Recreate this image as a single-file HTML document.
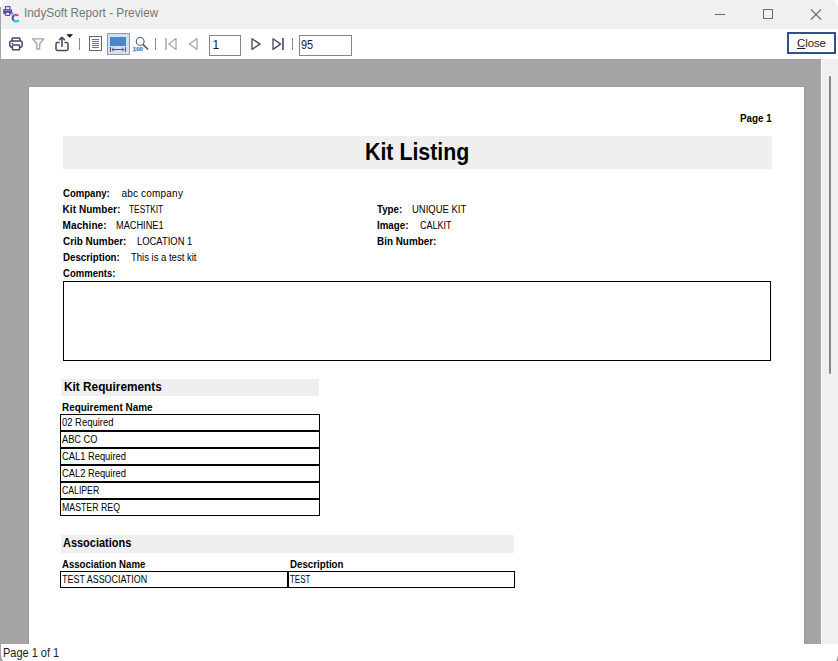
<!DOCTYPE html>
<html lang="en"><head><meta charset="utf-8"><title>IndySoft Report - Preview</title>
<style>
*{box-sizing:border-box;margin:0;padding:0}
html,body{width:838px;height:661px;overflow:hidden;background:#fff;font-family:"Liberation Sans",sans-serif}
body{position:relative}
.a{position:absolute}
.t{position:absolute;transform-origin:0 0;white-space:pre;font-family:"Liberation Sans",sans-serif}
#edge{left:0;top:7px;width:1px;height:654px;background:#a4a4a4}
#titlebar{left:1px;top:0;width:837px;height:29px;background:#f0f0f0;border-top-left-radius:8px;border-top-right-radius:8px}
#toolbar{left:1px;top:29px;width:837px;height:30px;background:#fff}
#view{left:1px;top:59px;width:820px;height:585px;background:#a5a3a5;border-top:1px solid #9f9d9f;overflow:hidden}
#paper{left:28px;top:86px;width:777px;height:560px;background:#fff;border:1px solid #9c9a9c}
#track{left:822px;top:59px;width:16px;height:585px;background:#f0f0f0}
#thumb{left:829px;top:76px;width:2px;height:298px;background:#868686;border-radius:1px}
#status{left:1px;top:644px;width:837px;height:17px;background:#fff}
.band{position:absolute;background:#efefef}
.box{position:absolute;border:1px solid #000;background:#fff}
.sep{position:absolute;width:1px;height:12px;top:38px;background:#8a8a8a}
.inp{position:absolute;top:35px;height:21px;border:1px solid #868686;background:#fff}
#closebtn{left:787px;top:32px;width:49px;height:22px;border:2px solid #2f4f8f;background:#fff}
svg{position:absolute;overflow:visible}

</style></head>
<body>
<div class="a" id="edge"></div>
<div class="a" id="titlebar"></div>
<div class="a" id="toolbar"></div>
<div class="a" id="view"></div>
<div class="a" id="paper"></div>
<div class="a" id="track"></div>
<div class="a" id="thumb"></div>
<div class="a" id="status"></div>
<svg style="left:0;top:641px" width="838" height="20" viewBox="0 641 838 20"><path d="M836 661 Q837.6 659 838 655 V661 Z" fill="#8c8c8c"/><path d="M1 654 Q1.300 659 3 661 H1 Z" fill="#a4a4a4"/></svg>

<!-- title bar icon -->
<svg id="appicon" style="left:0;top:0" width="24" height="28" viewBox="0 0 24 28">
  <rect x="5.5" y="6.600" width="4.400" height="3" fill="#f4f0fa" stroke="#6440a8" stroke-width="1.100"/>
  <path d="M3.200 9.300 H5 V10.400 H10.400 V9.300 H12 V13.200 Q12 14.300 10.900 14.300 H4.300 Q3.200 14.300 3.200 13.200 Z" fill="#6440a8"/>
  <rect x="5.800" y="12.300" width="3.900" height="3.200" fill="#f4f0fa" stroke="#6440a8" stroke-width="1"/>
  <path d="M12.200 11.600 L13.600 13.500 L12.200 15.200 L10.400 13.500 Z" fill="#22b8e2"/>
  <path d="M18.300 15.800 A3 3 0 0 0 13.300 16.300" fill="none" stroke="#e0359c" stroke-width="2.100"/>
  <path d="M13.500 15.900 A3 3 0 0 0 13.700 20.300" fill="none" stroke="#5a3fa6" stroke-width="2"/>
  <path d="M13.300 19.800 A3 3 0 0 0 18.600 20" fill="none" stroke="#16bfe6" stroke-width="2.200"/>
</svg>

<!-- window controls -->
<svg style="left:700px;top:0" width="138" height="29" viewBox="0 0 138 29">
  <path d="M15 14.5 H25" stroke="#6a6a6a" stroke-width="1"/>
  <rect x="63.5" y="9.5" width="9" height="9" fill="none" stroke="#6a6a6a" stroke-width="1"/>
  <path d="M111 9.5 L121 19.5 M121 9.5 L111 19.5" stroke="#6a6a6a" stroke-width="1.1"/>
</svg>

<!-- toolbar icons -->
<svg style="left:0;top:29px" width="360" height="30" viewBox="0 29 360 30">
  <!-- print -->
  <g fill="none" stroke="#4a4563" stroke-width="1.5" stroke-linejoin="round">
    <path d="M12.2 41 V38.6 Q12.2 38 12.8 38 H19.2 Q19.800 38 19.8 38.6 V41"/>
    <rect x="9.8" y="41" width="12.4" height="6.2" rx="1.6"/>
    <rect x="12.4" y="45" width="7.2" height="4.8" rx="0.8" fill="#fff"/>
    <path d="M11.6 43.4 H13.2" stroke-width="1.2"/>
  </g>
  <!-- filter -->
  <path d="M32.7 38.9 H43.7 L39.7 43.8 V49 H36.7 V43.8 Z" fill="#fff" stroke="#a6a6a6" stroke-width="1.4" stroke-linejoin="round"/>
  <!-- export -->
  <g fill="none" stroke="#4a4563" stroke-width="1.5" stroke-linejoin="round" stroke-linecap="round">
    <path d="M59 42.6 H57.6 Q56 42.6 56 44.200 V49 Q56 50.600 57.600 50.600 H66.400 Q68 50.600 68 49 V44.200 Q68 42.600 66.400 42.600 H65"/>
    <path d="M62 46.400 V37.400 M59.600 39.600 L62 37.200 L64.400 39.600"/>
  </g>
  <path d="M66.400 34.200 H73 L69.700 37.800 Z" fill="#111"/>
  <!-- page icon -->
  <rect x="89.500" y="36.500" width="12" height="14" fill="#fff" stroke="#686870" stroke-width="1"/>
  <path d="M92 39.500 H99 M92 41.500 H99 M92 43.500 H99 M92 45.500 H99 M92 47.500 H99" stroke="#3f7fd0" stroke-width="1"/>
  <!-- page width (selected) -->
  <rect x="107.500" y="33.500" width="22" height="21" fill="#cfe0f8" stroke="#9a9a9a" stroke-width="1"/>
  <rect x="110" y="37" width="16" height="9" fill="#4a86c8"/>
  <path d="M110.500 47 V52 M125.500 47 V52 M112 49.500 H124 M113.800 47.800 L112 49.500 L113.800 51.200 M122.200 47.800 L124 49.500 L122.200 51.200" fill="none" stroke="#55555f" stroke-width="1"/>
  <!-- zoom -->
  <circle cx="140.200" cy="41.400" r="3.900" fill="#fff" stroke="#5a5a62" stroke-width="1.100"/>
  <path d="M143.200 44.600 L147.600 49" stroke="#5a5a62" stroke-width="1.700" stroke-linecap="round"/>
  <text x="132.800" y="51" font-family="Liberation Sans, sans-serif" font-size="6" font-weight="700" fill="#3a80cc" stroke="#3a80cc" stroke-width="0.25">100</text>
  <!-- first -->
  <path d="M166 38 V50" stroke="#a9a9a9" stroke-width="1.600"/>
  <path d="M176 38.600 V49.400 L168.800 44 Z" fill="none" stroke="#a9a9a9" stroke-width="1.300" stroke-linejoin="round"/>
  <!-- prev -->
  <path d="M197 38.600 V49.400 L189.400 44 Z" fill="none" stroke="#a9a9a9" stroke-width="1.300" stroke-linejoin="round"/>
  <!-- next -->
  <path d="M252 38.800 V49.400 L260 44.100 Z" fill="none" stroke="#4a4563" stroke-width="1.300" stroke-linejoin="round"/>
  <!-- last -->
  <path d="M273 38.800 V49.400 L280.600 44.100 Z" fill="none" stroke="#4a4563" stroke-width="1.300" stroke-linejoin="round"/>
  <path d="M283 38 V50" stroke="#4a4563" stroke-width="1.600"/>
</svg>
<div class="sep" style="left:79px"></div>
<div class="sep" style="left:155px"></div>
<div class="sep" style="left:292px"></div>
<div class="inp" style="left:209px;width:32px"></div>
<div class="inp" style="left:299px;width:53px"></div>
<div class="a" id="closebtn"></div>
<span class="t" style="left:797px;top:37px;font-size:11.5px;line-height:12px;color:#222;letter-spacing:-0.1px"><u>C</u>lose</span>

<!-- report -->
<div class="band" style="left:63px;top:136px;width:709px;height:33px"></div>
<div class="box" style="left:63px;top:281px;width:708px;height:80px"></div>
<div class="band" style="left:61px;top:379px;width:258px;height:17px"></div>
<div class="box" style="left:60px;top:414px;width:260px;height:17px"></div>
<div class="box" style="left:60px;top:431px;width:260px;height:17px"></div>
<div class="box" style="left:60px;top:448px;width:260px;height:17px"></div>
<div class="box" style="left:60px;top:465px;width:260px;height:17px"></div>
<div class="box" style="left:60px;top:482px;width:260px;height:17px"></div>
<div class="box" style="left:60px;top:499px;width:260px;height:17px"></div>
<div class="band" style="left:61px;top:535px;width:453px;height:18px"></div>
<div class="box" style="left:60px;top:571px;width:228px;height:17px"></div>
<div class="box" style="left:288px;top:571px;width:227px;height:17px"></div>

<span class="t" style="left:24.23px;top:7.00px;font-size:12px;line-height:12px;font-weight:400;color:#767676;letter-spacing:0.000px;transform:scaleX(0.9819);">IndySoft Report - Preview</span>
<span class="t" style="left:212.52px;top:39.00px;font-size:12px;line-height:12px;font-weight:400;color:#222;letter-spacing:0.000px;">1</span>
<span class="t" style="left:301.36px;top:39.00px;font-size:12px;line-height:12px;font-weight:400;color:#222;letter-spacing:0.000px;transform:scaleX(0.9102);">95</span>
<span class="t" style="left:2.86px;top:647.00px;font-size:12px;line-height:12px;font-weight:400;color:#222;letter-spacing:0.000px;transform:scaleX(0.9148);">Page 1 of 1</span>
<span class="t" style="left:740.01px;top:114.00px;font-size:10px;line-height:10px;font-weight:700;color:#000;letter-spacing:0.000px;transform:scaleX(0.9829);">Page 1</span>
<span class="t" style="left:364.95px;top:141.00px;font-size:23px;line-height:23px;font-weight:700;color:#000;letter-spacing:0.000px;transform:scaleX(0.9280);">Kit Listing</span>
<span class="t" style="left:62.62px;top:189.00px;font-size:10px;line-height:10px;font-weight:700;color:#000;letter-spacing:0.000px;transform:scaleX(0.9569);">Company:</span>
<span class="t" style="left:121.40px;top:189.00px;font-size:10px;line-height:10px;font-weight:400;color:#000;letter-spacing:0.202px;">abc company</span>
<span class="t" style="left:62.60px;top:205.00px;font-size:10px;line-height:10px;font-weight:700;color:#000;letter-spacing:0.057px;">Kit Number:</span>
<span class="t" style="left:129.17px;top:205.00px;font-size:10px;line-height:10px;font-weight:400;color:#000;letter-spacing:0.000px;transform:scaleX(0.8316);">TESTKIT</span>
<span class="t" style="left:62.60px;top:221.00px;font-size:10px;line-height:10px;font-weight:700;color:#000;letter-spacing:0.094px;">Machine:</span>
<span class="t" style="left:116.13px;top:221.00px;font-size:10px;line-height:10px;font-weight:400;color:#000;letter-spacing:0.000px;transform:scaleX(0.9209);">MACHINE1</span>
<span class="t" style="left:62.60px;top:237.00px;font-size:10px;line-height:10px;font-weight:700;color:#000;letter-spacing:0.000px;transform:scaleX(0.9921);">Crib Number:</span>
<span class="t" style="left:137.12px;top:237.00px;font-size:10px;line-height:10px;font-weight:400;color:#000;letter-spacing:0.000px;transform:scaleX(0.9418);">LOCATION 1</span>
<span class="t" style="left:62.61px;top:253.00px;font-size:10px;line-height:10px;font-weight:700;color:#000;letter-spacing:0.000px;transform:scaleX(0.9735);">Description:</span>
<span class="t" style="left:131.02px;top:253.00px;font-size:10px;line-height:10px;font-weight:400;color:#000;letter-spacing:0.000px;transform:scaleX(0.9491);">This is a test kit</span>
<span class="t" style="left:62.62px;top:269.00px;font-size:10px;line-height:10px;font-weight:700;color:#000;letter-spacing:0.000px;transform:scaleX(0.9525);">Comments:</span>
<span class="t" style="left:377.01px;top:205.00px;font-size:10px;line-height:10px;font-weight:700;color:#000;letter-spacing:0.000px;transform:scaleX(0.9716);">Type:</span>
<span class="t" style="left:412.02px;top:205.00px;font-size:10px;line-height:10px;font-weight:400;color:#000;letter-spacing:0.000px;transform:scaleX(0.9470);">UNIQUE KIT</span>
<span class="t" style="left:377.01px;top:221.00px;font-size:10px;line-height:10px;font-weight:700;color:#000;letter-spacing:0.000px;transform:scaleX(0.9741);">Image:</span>
<span class="t" style="left:420.04px;top:221.00px;font-size:10px;line-height:10px;font-weight:400;color:#000;letter-spacing:0.000px;transform:scaleX(0.8967);">CALKIT</span>
<span class="t" style="left:377.00px;top:237.00px;font-size:10px;line-height:10px;font-weight:700;color:#000;letter-spacing:0.000px;transform:scaleX(0.9900);">Bin Number:</span>
<span class="t" style="left:64.43px;top:380.00px;font-size:13px;line-height:13px;font-weight:700;color:#000;letter-spacing:0.000px;transform:scaleX(0.9090);">Kit Requirements</span>
<span class="t" style="left:62.00px;top:403.00px;font-size:10px;line-height:10px;font-weight:700;color:#000;letter-spacing:0.000px;transform:scaleX(0.9930);">Requirement Name</span>
<span class="t" style="left:63.46px;top:536.00px;font-size:13px;line-height:13px;font-weight:700;color:#000;letter-spacing:0.000px;transform:scaleX(0.8433);">Associations</span>
<span class="t" style="left:62.02px;top:560.00px;font-size:10px;line-height:10px;font-weight:700;color:#000;letter-spacing:0.000px;transform:scaleX(0.9607);">Association Name</span>
<span class="t" style="left:289.81px;top:560.00px;font-size:10px;line-height:10px;font-weight:700;color:#000;letter-spacing:0.000px;transform:scaleX(0.9725);">Description</span>
<span class="t" style="left:62.04px;top:575.00px;font-size:10px;line-height:10px;font-weight:400;color:#000;letter-spacing:0.000px;transform:scaleX(0.8948);">TEST ASSOCIATION</span>
<span class="t" style="left:289.88px;top:575.00px;font-size:10px;line-height:10px;font-weight:400;color:#000;letter-spacing:0.000px;transform:scaleX(0.7941);">TEST</span>
<span class="t" style="left:62.02px;top:418.00px;font-size:10px;line-height:10px;font-weight:400;color:#000;letter-spacing:0.000px;transform:scaleX(0.9434);">02 Required</span>
<span class="t" style="left:62.03px;top:435.00px;font-size:10px;line-height:10px;font-weight:400;color:#000;letter-spacing:0.000px;transform:scaleX(0.9232);">ABC CO</span>
<span class="t" style="left:62.03px;top:452.00px;font-size:10px;line-height:10px;font-weight:400;color:#000;letter-spacing:0.000px;transform:scaleX(0.9346);">CAL1 Required</span>
<span class="t" style="left:62.03px;top:469.00px;font-size:10px;line-height:10px;font-weight:400;color:#000;letter-spacing:0.000px;transform:scaleX(0.9346);">CAL2 Required</span>
<span class="t" style="left:62.05px;top:486.00px;font-size:10px;line-height:10px;font-weight:400;color:#000;letter-spacing:0.000px;transform:scaleX(0.8692);">CALIPER</span>
<span class="t" style="left:62.05px;top:503.00px;font-size:10px;line-height:10px;font-weight:400;color:#000;letter-spacing:0.000px;transform:scaleX(0.8771);">MASTER REQ</span>
</body></html>
